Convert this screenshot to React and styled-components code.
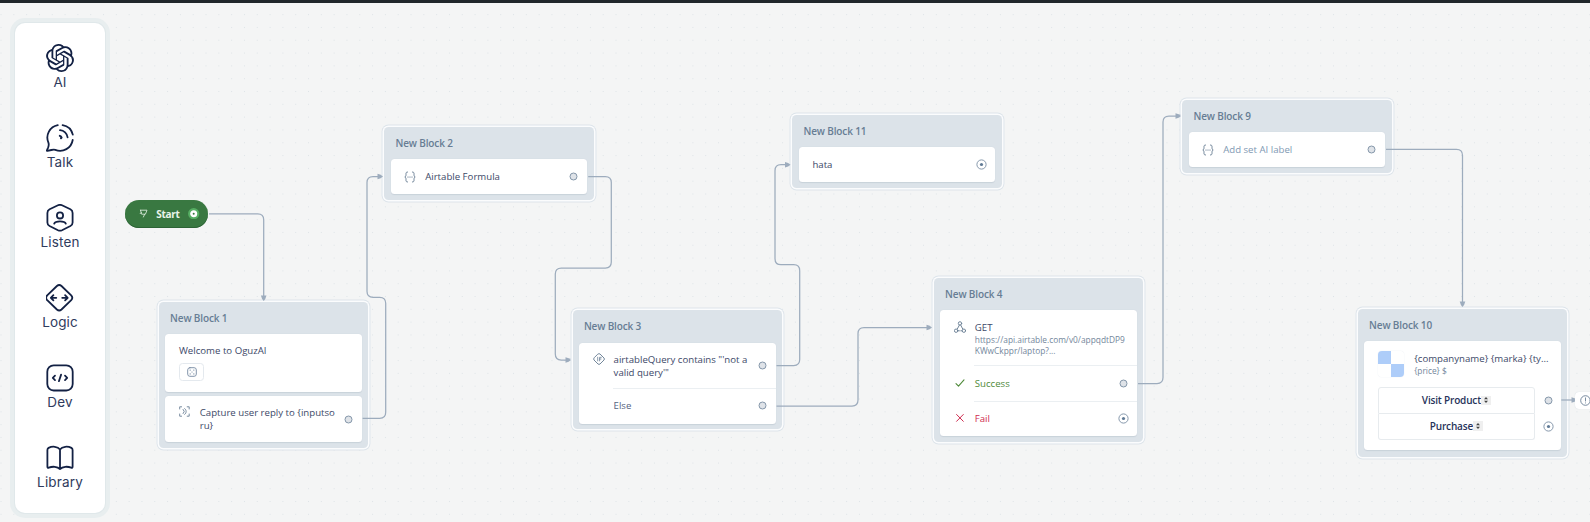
import React from "react";
import styled, { createGlobalStyle } from "styled-components";
import { SiOpenai } from "react-icons/si";

const GlobalStyle = createGlobalStyle`
  *, *::before, *::after { box-sizing: border-box; }
  body { margin: 0; overflow: hidden; font-family: "Open Sans", "Noto Sans", sans-serif; }
`;

const line = "#9dacbd";
const slate = "#6a7f95";
const navy = "#132144";
const ink = "#3c4868";

/* ---------- shell ---------- */

const Page = styled.div`
  position: relative;
  display: flex;
  flex-direction: column;
  width: 1590px;
  height: 522px;
  overflow: hidden;
  background-color: #f4f5f5;
  background-image: radial-gradient(circle, #dfe4e7 0.6px, transparent 1px);
  background-size: 12.825px 12.825px;
  background-position: -5.4px -4.6px;
`;

const TopBar = styled.header`
  flex: none;
  height: 3px;
  background: #20272b;
`;

const Sidebar = styled.nav`
  position: relative;
  z-index: 2;
  display: flex;
  flex-direction: column;
  flex: none;
  width: 90px;
  height: 490px;
  margin: 20px 0 0 15px;
  padding-top: 21px;
  border-radius: 10px;
  background: #fff;
  box-shadow: 0 0 0 1px #e0e8ea, 0 0 0 5px #e8eeef;
`;

const Tool = styled.a`
  display: flex;
  flex: none;
  flex-direction: column;
  align-items: center;
  height: 80.1px;
  color: ${navy};

  &:last-child { height: 60px; }
`;

const ToolIcon = styled.span`
  display: flex;
  width: 28px;
  height: 28px;

  svg { display: block; }
`;

const ToolLabel = styled.span`
  margin-top: 2px;
  font: 400 13.5px/17px Inter, sans-serif;
  letter-spacing: 0.15px;
  color: #2f3b5d;
`;

/* ---------- canvas ---------- */

const Wires = styled.svg`
  position: absolute;
  inset: 0;
  pointer-events: none;
`;

const Block = styled.section`
  position: absolute;
  left: ${(p) => p.$x}px;
  top: ${(p) => p.$y}px;
  display: flex;
  flex-direction: column;
  gap: 4.5px;
  width: 209.2px;
  height: ${(p) => p.$h}px;
  padding: 0 6.2px 0 6.4px;
  border-radius: 4.5px;
  background: #dce3e9;
  box-shadow: 0 0 0 1.5px #fbfcfd, 0 0 0 2.4px #dde4ea;
`;

const BlockTitle = styled.h2`
  flex: none;
  height: 27.8px;
  margin: 0;
  padding: 8.8px 0 0 4.7px;
  font-size: 10px;
  line-height: 15px;
  font-weight: 600;
  letter-spacing: -0.14px;
  color: #677d94;
`;

const Card = styled.div`
  flex: none;
  display: flex;
  flex-direction: column;
  height: ${(p) => p.$h}px;
  border-radius: 3.5px;
  background: #fff;
  box-shadow: 0 0.4px 1px rgba(60, 85, 110, 0.12);
`;

const Row = styled.div`
  display: flex;
  flex: none;
  height: ${(p) => p.$h}px;
  align-items: ${(p) => (p.$top ? "flex-start" : "center")};
  padding: ${(p) => (p.$top ? "10.2px" : "0")} 8px ${(p) => (p.$top ? "10.2px" : "0")} 13.6px;
`;

const Divider = styled.hr`
  flex: none;
  height: 1px;
  margin: 0 0 -1px 33.7px;
  border: 0;
  background: #ebeff2;
`;

const Glyph = styled.span`
  display: flex;
  flex: none;
  width: 20.8px;
  color: ${(p) => p.$color || slate};

  svg { display: block; }
`;

const Label = styled.span`
  display: block;
  flex: 1;
  min-width: 0;
  padding-left: ${(p) => (p.$indent ? "20.8px" : "0")};
  font-size: 9.65px;
  line-height: 13px;
  white-space: nowrap;
  color: ${(p) => p.$color || ink};
`;

const Small = styled.span`
  display: block;
  font-size: 8.35px;
  line-height: 11.3px;
  color: #73869b;
`;

const PortSlot = styled.span`
  display: flex;
  flex: none;
  align-items: center;
  justify-content: center;
  width: 11px;
  height: 11px;
  align-self: center;

  svg { display: block; }
`;

const StartPill = styled.div`
  position: absolute;
  left: 125px;
  top: 199.6px;
  display: flex;
  align-items: center;
  width: 83.4px;
  height: 28px;
  padding: 0 8.6px 0 14px;
  border-radius: 14px;
  background: #397841;
  box-shadow: inset 0 -1px 0 #2c6335;
  color: #dfeee0;
`;

const StartText = styled.span`
  flex: 1;
  padding-left: 8.2px;
  font-size: 10px;
  font-weight: 700;
  line-height: 14px;
  letter-spacing: -0.25px;
  color: #eaf4ea;
`;

const Welcome = styled.div`
  display: flex;
  flex-direction: column;
  align-items: flex-start;
  height: 57px;
  padding: 10.2px 13.6px 0;
`;

const WelcomeText = styled(Label)`
  flex: none;
`;

const EmojiChip = styled.span`
  display: flex;
  flex: none;
  align-items: center;
  justify-content: center;
  width: 25.5px;
  height: 18px;
  margin-top: 6px;
  border: 1px solid #e4e9ee;
  border-radius: 3.5px;
  color: #7488a0;
`;

const Product = styled.div`
  display: flex;
  flex: none;
  height: 46px;
  padding: 10px 8px 0 14px;
`;

const Thumb = styled.span`
  flex: none;
  width: 26px;
  height: 26px;
  margin-right: 9.8px;
  border-radius: 4px;
  background: conic-gradient(#fff 25%, #aecdf9 0 50%, #fff 0 75%, #aecdf9 0);
  box-shadow: 0 0 1px #d5dde6;
`;

const ProductText = styled.div`
  padding-top: 0.8px;
`;

const Actions = styled.div`
  display: grid;
  grid-template-columns: 157px 11px;
  column-gap: 7.6px;
  margin-left: 14px;
`;

const Action = styled.div`
  display: flex;
  align-items: center;
  justify-content: center;
  height: 26.3px;
  padding-right: 1px;
  border: 1px solid #e7ebee;
  border-top-width: ${(p) => (p.$last ? 0 : "1px")};
  border-radius: ${(p) => (p.$last ? "0 0 3px 3px" : "3px 3px 0 0")};
  font-size: 10px;
  font-weight: 600;
  line-height: 13px;
  letter-spacing: -0.17px;
  color: #27335a;
`;

const Stepper = styled.span`
  display: flex;
  align-items: center;
  justify-content: center;
  width: 10px;
  height: 9.5px;
  background: #efefef;
`;

const Jump = styled.div`
  position: absolute;
  left: 1575px;
  top: 392px;
  display: flex;
  align-items: center;
  width: 30px;
  height: 16.5px;
  padding-left: 4.6px;
  border-radius: 4px;
  background: #fff;
  box-shadow: 0 0 1px #c7d0d8;
  color: ${slate};
`;

/* ---------- icons ---------- */

const Svg = ({ size = 28, w = 1.8, box = size, children }) => (
  <svg
    width={size}
    height={size}
    viewBox={`0 0 ${box} ${box}`}
    fill="none"
    stroke="currentColor"
    strokeWidth={w}
    strokeLinecap="round"
    strokeLinejoin="round"
  >
    {children}
  </svg>
);

const TalkIcon = () => (
  <Svg>
    <path d="M11.8 1.1A12.7 12.7 0 0 0 2.4 18.6C3.1 20.3 2.9 21.5 2 23.8L.9 26.3C.7 26.9 1 27 1.5 26.9L5.3 26C7 25.6 8 25.6 9.3 25.8A12.7 12.7 0 0 0 26.7 16" />
    <path d="M16.6 1.1A12.7 12.7 0 0 1 26.8 10.6M14 6.2A8.2 8.2 0 0 1 21.6 13.4" />
    <path d="M13.8 11.9A3 3 0 0 1 15.6 13.6L15 14.2" strokeWidth="2" />
  </Svg>
);

const ListenIcon = () => (
  <Svg>
    <path d="M12 1.3Q14 .3 16 1.3L24.4 5.3Q26.6 6.5 26.6 9V18.4Q26.6 20.8 24.4 22L16 26.2Q14 27.1 12 26.2L3.6 22Q1.4 20.8 1.4 18.4V9Q1.4 6.5 3.6 5.3Z" />
    <circle cx="14" cy="11.4" r="3.1" />
    <path d="M8.2 19.6C9.4 16.6 18.6 16.6 19.8 19.6" />
  </Svg>
);

const LogicIcon = () => (
  <Svg>
    <path d="M10.9 2Q13.2 0 15.5 2L25.2 11.3Q27.4 13.8 25.2 16.2L15.5 25.5Q13.2 27.6 10.9 25.5L1.2 16.2Q-1 13.8 1.2 11.3Z" />
    <path d="M10.3 13.8H4.8M7.4 11.2 4.8 13.8 7.4 16.4M16.2 13.8H21.7M19.1 11.2 21.7 13.8 19.1 16.4" />
  </Svg>
);

const DevIcon = () => (
  <Svg>
    <rect x="1.3" y="1.3" width="25.4" height="25.2" rx="6.4" />
    <path d="M9 11.7 6.8 13.9 9 16.1M19 11.7 21.2 13.9 19 16.1M15.1 10.6 12.9 17.2" />
  </Svg>
);

const LibraryIcon = () => (
  <Svg>
    <path d="M14 5.4C11.8 2.3 6.2 2 2.6 3.9Q1.4 4.6 1.4 6V22.8Q1.4 24.3 2.8 23.7C6.4 22.2 11.4 22.3 14 25.1C16.6 22.3 21.6 22.2 25.2 23.7Q26.6 24.3 26.6 22.8V6Q26.6 4.6 25.4 3.9C21.8 2 16.2 2.3 14 5.4V25" />
  </Svg>
);

const BracesIcon = () => (
  <Svg size={12} w={1}>
    <path d="M3.5 1C1.9 1 2 2 2 3.4S1.8 5.6.8 6C1.8 6.4 2 7.2 2 8.6S1.9 11 3.5 11M8.5 1C10.1 1 10 2 10 3.4S10.2 5.6 11.2 6C10.2 6.4 10 7.2 10 8.6S10.1 11 8.5 11" />
    <path d="M3.9 6H4.1M5.9 6H6.1M7.9 6H8.1" strokeWidth="1.2" />
  </Svg>
);

const CaptureIcon = () => (
  <Svg size={11} w={0.9}>
    <path d="M.7 3V.8H2.6M8.2.8H10.2V3M10.2 8V10.2H8.2M2.6 10.2H.7V8" />
    <path d="M4.1 3.5 5.2 5.5 4.1 7.5M5.7 2.6C7.7 3.6 7.7 7.4 5.7 8.4" />
  </Svg>
);

const ConditionIcon = () => (
  <Svg size={12} w={0.95}>
    <path d="M5 1Q6 .2 7 1L11 5Q11.8 6 11 7L7 11Q6 11.8 5 11L1 7Q.2 6 1 5Z" />
    <path d="M4.7 4.2V7.9M6.6 7.9V4.3H8.3M6.6 6H8" strokeWidth="0.8" />
  </Svg>
);

const WebhookIcon = () => (
  <Svg size={12} w={0.95}>
    <circle cx="6" cy="2.4" r="1.7" />
    <circle cx="2.1" cy="9.7" r="1.7" />
    <circle cx="9.9" cy="9.7" r="1.7" />
    <path d="M5.4 4.1 3.3 7.9M6.7 4.1 8.7 7.9M4 9.8H5.4M6.8 9.8H8" />
  </Svg>
);

const CheckIcon = () => (
  <Svg size={12} w={1.1}>
    <path d="M2 6.7 4.5 9.2 10 2.8" />
  </Svg>
);

const CrossIcon = () => (
  <Svg size={12} w={1}>
    <path d="M2.6 2.5 9.3 9.3M9.3 2.5 2.6 9.3" />
  </Svg>
);

const DiceIcon = () => (
  <Svg size={10} w={0.9}>
    <rect x=".7" y=".7" width="8.6" height="8.6" rx="2.2" />
    <path d="M3.1 3.1H3.2M6.8 3.1H6.9M3.1 6.9H3.2M6.8 6.9H6.9M4.95 5H5.05" strokeWidth="1.1" />
  </Svg>
);

const FlagIcon = () => (
  <Svg size={9} w={0.85}>
    <path d="M1.5 1.2H8L6.4 5.2H2.6L1.5 1.2M2.4 3.4 1.2 4.6M5.6 5.4 4.4 8" />
  </Svg>
);

const AlertIcon = () => (
  <Svg size={11} w={0.9}>
    <circle cx="5.5" cy="5.5" r="4.8" />
    <path d="M5.5 2.9V6M5.5 7.9V8" />
  </Svg>
);

const StepperIcon = () => (
  <svg width="6" height="8" viewBox="0 0 6 8" fill="#444">
    <path d="M1 3.2 3 1.1 5 3.2ZM1 4.8H5L3 6.9Z" />
  </svg>
);

const StartPortIcon = () => (
  <svg width="11.4" height="11.4" viewBox="0 0 11.4 11.4">
    <circle cx="5.7" cy="5.7" r="4.6" fill="#fff" stroke="#56ae63" strokeWidth="2.1" />
    <circle cx="5.7" cy="5.7" r="1" fill="#397841" />
  </svg>
);

/* ---------- parts ---------- */

const Port = ({ open }) => (
  <PortSlot>
    <svg width="11" height="11" viewBox="0 0 11 11" stroke="#8092a7" strokeWidth="0.95">
      {open ? (
        <>
          <circle cx="5.5" cy="5.5" r="4.6" fill="#fff" />
          <circle cx="5.5" cy="5.5" r="1.6" fill="#607a95" stroke="none" />
        </>
      ) : (
        <circle cx="5.5" cy="5.5" r="3.5" fill="#dfe3e8" />
      )}
    </svg>
  </PortSlot>
);

const tools = [
  { label: "AI", icon: <SiOpenai size={28} /> },
  { label: "Talk", icon: <TalkIcon /> },
  { label: "Listen", icon: <ListenIcon /> },
  { label: "Logic", icon: <LogicIcon /> },
  { label: "Dev", icon: <DevIcon /> },
  { label: "Library", icon: <LibraryIcon /> },
];

const wires = [
  "M209 213.8H257.7Q263.7 213.8 263.7 219.8V296",
  "M362.6 418.3H379.7Q385.7 418.3 385.7 412.3V303.3Q385.7 297.3 379.7 297.3H373Q367 297.3 367 291.3V182.5Q367 176.5 373 176.5H378",
  "M588.2 176.5H605.3Q611.3 176.5 611.3 182.5V262Q611.3 268 605.3 268H561.3Q555.3 268 555.3 274V354Q555.3 360 561.3 360H567",
  "M776.5 365.5H793.7Q799.7 365.5 799.7 359.5V270.7Q799.7 264.7 793.7 264.7H781Q775 264.7 775 258.7V170.7Q775 164.7 781 164.7H786",
  "M776.5 406H852Q858 406 858 400V333.5Q858 327.5 864 327.5H928",
  "M1138 383.5H1157Q1163 383.5 1163 377.5V122Q1163 116 1169 116H1177",
  "M1386 149.3H1456.5Q1462.5 149.3 1462.5 155.3V303",
  "M1561.3 400H1573",
];

const arrowsRight = [[383, 176.5], [571, 360], [790.5, 164.7], [932, 327.5], [1181, 116], [1577, 400]];
const arrowsDown = [[263.7, 301], [1462.5, 307]];

const Connections = () => (
  <Wires width="1590" height="522" fill="none" stroke={line} strokeWidth="1.25">
    {wires.map((d) => <path key={d} d={d} />)}
    <g fill={line} stroke="none">
      {arrowsRight.map(([x, y]) => (
        <path key={x} d={`M${x - 5.5} ${y - 2.8}Q${x - 2} ${y - 2} ${x} ${y}Q${x - 2} ${y + 2} ${x - 5.5} ${y + 2.8}Z`} />
      ))}
      {arrowsDown.map(([x, y]) => (
        <path key={x} d={`M${x - 2.8} ${y - 5.5}Q${x - 2} ${y - 2} ${x} ${y}Q${x + 2} ${y - 2} ${x + 2.8} ${y - 5.5}Z`} />
      ))}
    </g>
  </Wires>
);

export default function App() {
  return (
    <>
      <GlobalStyle />
      <Page>
        <TopBar />
        <Sidebar>
          {tools.map((t) => (
            <Tool key={t.label}>
              <ToolIcon>{t.icon}</ToolIcon>
              <ToolLabel>{t.label}</ToolLabel>
            </Tool>
          ))}
        </Sidebar>

        <StartPill>
          <FlagIcon />
          <StartText>Start</StartText>
          <StartPortIcon />
        </StartPill>

        <Block $x={159} $y={302} $h={145.7}>
          <BlockTitle>New Block 1</BlockTitle>
          <Card $h={57.3}>
            <Welcome>
              <WelcomeText>Welcome to OguzAI</WelcomeText>
              <EmojiChip><DiceIcon /></EmojiChip>
            </Welcome>
          </Card>
          <Card $h={46}>
            <Row $h={46} $top>
              <Glyph><CaptureIcon /></Glyph>
              <Label>Capture user reply to {"{inputso"}<br />{"ru}"}</Label>
              <Port />
            </Row>
          </Card>
        </Block>

        <Block $x={384.4} $y={127} $h={73}>
          <BlockTitle>New Block 2</BlockTitle>
          <Card $h={34.6}>
            <Row $h={34.6}>
              <Glyph><BracesIcon /></Glyph>
              <Label>Airtable Formula</Label>
              <Port />
            </Row>
          </Card>
        </Block>

        <Block $x={572.8} $y={310.4} $h={119}>
          <BlockTitle>New Block 3</BlockTitle>
          <Card $h={81}>
            <Row $h={45.5} $top>
              <Glyph><ConditionIcon /></Glyph>
              <Label>airtableQuery contains "'not a<br />valid query'"</Label>
              <Port />
            </Row>
            <Divider />
            <Row $h={35.5}>
              <Label $indent $color="#55647f">Else</Label>
              <Port />
            </Row>
          </Card>
        </Block>

        <Block $x={792.4} $y={115} $h={73.3}>
          <BlockTitle>New Block 11</BlockTitle>
          <Card $h={34.6}>
            <Row $h={34.6}>
              <Label>hata</Label>
              <Port open />
            </Row>
          </Card>
        </Block>

        <Block $x={934} $y={278.2} $h={163.5}>
          <BlockTitle>New Block 4</BlockTitle>
          <Card $h={125.6}>
            <Row $h={55} $top>
              <Glyph><WebhookIcon /></Glyph>
              <Label>
                GET
                <Small>https://api.airtable.com/v0/appqdtDP9<br />KWwCkppr/laptop?...</Small>
              </Label>
            </Row>
            <Divider />
            <Row $h={35.2}>
              <Glyph $color="#4f8a3a"><CheckIcon /></Glyph>
              <Label $color="#4f8a3a">Success</Label>
              <Port />
            </Row>
            <Divider />
            <Row $h={35.2}>
              <Glyph $color="#cf2b4f"><CrossIcon /></Glyph>
              <Label $color="#cf2b4f">Fail</Label>
              <Port open />
            </Row>
          </Card>
        </Block>

        <Block $x={1182.4} $y={100} $h={73}>
          <BlockTitle>New Block 9</BlockTitle>
          <Card $h={34.8}>
            <Row $h={34.8}>
              <Glyph><BracesIcon /></Glyph>
              <Label $color="#7f99b3">Add set AI label</Label>
              <Port />
            </Row>
          </Card>
        </Block>

        <Block $x={1358} $y={309} $h={147.7}>
          <BlockTitle>New Block 10</BlockTitle>
          <Card $h={109}>
            <Product>
              <Thumb />
              <ProductText>
                <Label>{"{companyname} {marka} {ty..."}</Label>
                <Small>{"{price} $"}</Small>
              </ProductText>
            </Product>
            <Actions>
              <Action>Visit Product<Stepper><StepperIcon /></Stepper></Action>
              <Port />
              <Action $last>Purchase<Stepper><StepperIcon /></Stepper></Action>
              <Port open />
            </Actions>
          </Card>
        </Block>

        <Connections />
        <Jump><AlertIcon /></Jump>
      </Page>
    </>
  );
}
